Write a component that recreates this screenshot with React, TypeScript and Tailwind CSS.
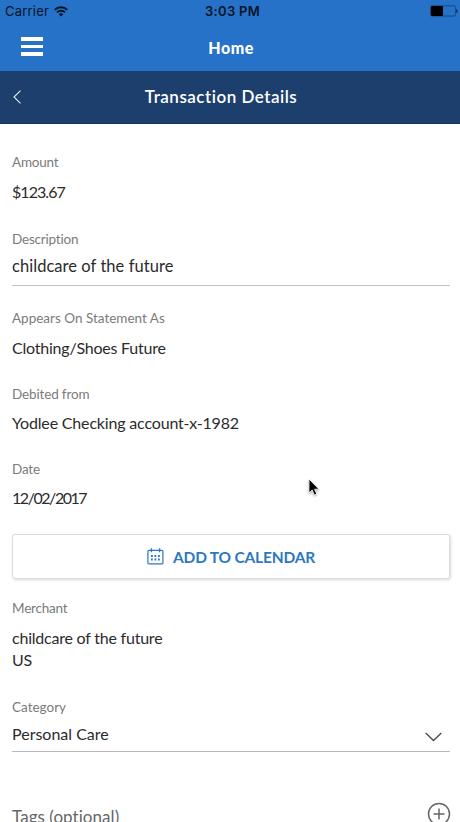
import React from 'react';

interface FieldProps {
  label: string;
  labelClass?: string;
  className?: string;
  children: React.ReactNode;
}

const Field: React.FC<FieldProps> = ({ label, labelClass = 'leading-[19px]', className = '', children }) => (
  <div className={className}>
    <p className={`h-5 text-[13.5px] text-[#7b7b7b] ${labelClass}`}>{label}</p>
    {children}
  </div>
);

const StatusBar: React.FC = () => (
  <div className="grid h-[22px] grid-cols-3 items-center pl-[5px] font-['Inter','Liberation_Sans',sans-serif] text-[13px] text-[#071426]">
    <div className="flex items-center gap-[5px] pt-px">
      <span className="tracking-[0.2px]">Carrier</span>
      <svg className="mb-px h-[11px] w-[14px]" viewBox="0 0 14 11" fill="none" stroke="#071426" strokeWidth="1.9">
        <path d="M0.7 3.9C4.2 0.3 9.8 0.3 13.3 3.9" />
        <path d="M3 6.4C5.2 4.2 8.8 4.2 11 6.4" />
        <path d="M7 10.6L4.7 8.2C6 7 8 7 9.3 8.2Z" fill="#071426" stroke="none" />
      </svg>
    </div>
    <span className="pt-px text-center font-semibold tracking-[0.3px]">3:03 PM</span>
    <svg className="mr-[2px] h-[12px] w-[28px] justify-self-end" viewBox="0 0 28 12">
      <rect x="0.5" y="0.8" width="25" height="10.2" rx="1.5" fill="none" stroke="#15406f" strokeWidth="0.8" />
      <rect x="1" y="1" width="12" height="10" rx="1" fill="#000" />
      <path d="M26.3 4v4c1.6-.6 1.6-3.4 0-4z" fill="#071426" />
    </svg>
  </div>
);

const CalendarIcon: React.FC = () => (
  <svg className="h-[17px] w-[17px]" viewBox="0 0 17 17" fill="none" stroke="#2d78c0" strokeWidth="1.2">
    <rect x="0.9" y="2.3" width="15" height="13.6" rx="1" />
    <path d="M4.4 0.3v4M12.6 0.3v4" strokeWidth="1.3" />
    <path d="M4 8h1.8M7.5 8h1.8M11 8h1.8M4 11.5h1.8M7.5 11.5h1.8M11 11.5h1.8" strokeWidth="1.8" />
  </svg>
);

const App: React.FC = () => {
  return (
    <div className="relative h-[822px] w-[460px] overflow-hidden bg-white font-['Lato','Liberation_Sans',sans-serif] text-[#2b2b2b] [font-variant-ligatures:none]">
      {/* App bar */}
      <header className="h-[71px] bg-[#2672c8]">
        <StatusBar />
        <div className="grid h-[49px] grid-cols-3 items-center">
          <button aria-label="Menu" className="ml-[21px] flex w-[22px] flex-col gap-1">
            <span className="h-[3.5px] bg-white" />
            <span className="h-[3.5px] bg-white" />
            <span className="h-[3.5px] bg-white" />
          </button>
          <h1 className="pl-[2px] pt-[3px] text-center text-[16px] font-black tracking-[0.5px] text-white">Home</h1>
        </div>
      </header>

      {/* Page title */}
      <div className="flex h-[53px] items-center border-b border-[#16335a] bg-[#1d3f6d] pr-10">
        <button aria-label="Back" className="ml-3">
          <svg className="h-[14px] w-[10px]" viewBox="0 0 10 14" fill="none" stroke="#e4ebf4" strokeWidth="1.1">
            <path d="M8.5 0.7L2 7l6.5 6.3" />
          </svg>
        </button>
        <h2 className="flex-1 text-center text-[17px] font-semibold tracking-[0.5px] text-white">Transaction Details</h2>
      </div>

      <main className="px-3 pt-7">
        <Field label="Amount" labelClass="leading-5 tracking-[-0.2px]" className="h-[77px]">
          <p className="pt-2 text-[16px] leading-6 tracking-[-0.95px]">$123.67</p>
        </Field>

        <Field label="Description" labelClass="leading-5 tracking-[-0.2px]" className="h-[80px]">
          <p className="mr-[-2px] h-[37px] border-b border-[#c4c4c4] pt-[5px] text-[16.5px] leading-6 tracking-[0.05px]">
            childcare of the future
          </p>
        </Field>

        <Field label="Appears On Statement As" className="h-[75px]">
          <p className="pt-[7px] text-[16px] leading-6 tracking-[-0.22px]">Clothing/Shoes Future</p>
        </Field>

        <Field label="Debited from" labelClass="leading-5 tracking-[-0.15px]" className="h-[75px]">
          <p className="pt-[7px] text-[16px] leading-6 tracking-[-0.17px]">Yodlee Checking account-x-1982</p>
        </Field>

        <Field label="Date" labelClass="leading-5 tracking-[-0.2px]" className="h-[75px]">
          <p className="pt-[7px] text-[16px] leading-6 tracking-[-1.45px]">12/02/2017</p>
        </Field>

        <button className="flex h-[45px] w-[438px] items-center justify-center gap-[9px] rounded-[3px] border border-[#dcdcdc] bg-white text-[15.5px] font-bold tracking-[-0.2px] text-[#2d78c0] shadow-[1px_1px_3px_rgba(0,0,0,0.15)]">
          <CalendarIcon />
          <span className="pt-[2px]">ADD TO CALENDAR</span>
        </button>

        <Field label="Merchant" labelClass="leading-[19px] tracking-[-0.2px]" className="mt-5 h-[99px]">
          <p className="pt-2 text-[16px] leading-[22px] tracking-[-0.22px]">childcare of the future</p>
          <p className="text-[16px] leading-[22px] tracking-[-0.22px]">US</p>
        </Field>

        <Field label="Category" className="h-[107px]">
          <div className="mr-[-2px] flex h-[34px] justify-between border-b border-[#b9b9b9] pt-[4px]">
            <span className="text-[16px] leading-6">Personal Care</span>
            <svg className="mr-[8px] mt-[10px] h-[10px] w-[17px]" viewBox="0 0 17 10" fill="none" stroke="#484848" strokeWidth="1.3">
              <path d="M0.7 1l7.8 7.5L16.3 1" />
            </svg>
          </div>
        </Field>

        <div className="mr-[-3px] flex items-start justify-between">
          <span className="text-[17px] leading-6 tracking-[0.05px] text-[#666]">Tags (optional)</span>
          <svg className="mt-[-3px] h-[24px] w-[24px]" viewBox="0 0 24 24" fill="none" stroke="#666" strokeWidth="1.5">
            <circle cx="12" cy="12" r="10.5" />
            <path d="M6.5 12h11M12 6.5v11" />
          </svg>
        </div>
      </main>

      {/* Pointer */}
      <svg className="absolute left-[308px] top-[478px] h-[20px] w-[14px] drop-shadow-[0_1px_1px_rgba(0,0,0,0.35)]" viewBox="0 0 14 20">
        <path d="M1 1v14l3.2-3 2.1 5 2.4-1-2.1-4.8h4.3z" fill="#000" stroke="#fff" strokeWidth="0.8" />
      </svg>
    </div>
  );
};

export default App;
